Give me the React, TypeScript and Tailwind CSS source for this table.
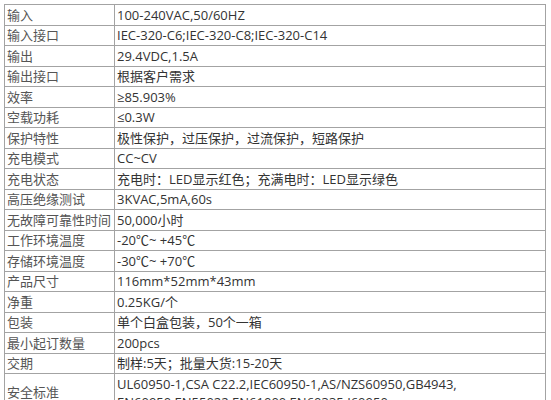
const rows: [string, string][] = [
  ['输入', '100-240VAC,50/60HZ'],
  ['输入接口', 'IEC-320-C6;IEC-320-C8;IEC-320-C14'],
  ['输出', '29.4VDC,1.5A'],
  ['输出接口', '根据客户需求'],
  ['效率', '≥85.903%'],
  ['空载功耗', '≤0.3W'],
  ['保护特性', '极性保护，过压保护，过流保护，短路保护'],
  ['充电模式', 'CC~CV'],
  ['充电状态', '充电时：LED显示红色；充满电时：LED显示绿色'],
  ['高压绝缘测试', '3KVAC,5mA,60s'],
  ['无故障可靠性时间', '50,000小时'],
  ['工作环境温度', '-20℃~ +45℃'],
  ['存储环境温度', '-30℃~ +70℃'],
  ['产品尺寸', '116mm*52mm*43mm'],
  ['净重', '0.25KG/个'],
  ['包装', '单个白盒包装，50个一箱'],
  ['最小起订数量', '200pcs'],
  ['交期', '制样:5天；批量大货:15-20天'],
]

export default function App() {
  return (
    <div className="w-[551px] h-[400px] overflow-hidden bg-white pt-[4px] pl-[4px] font-['Open_Sans','Noto_Sans_CJK_SC',sans-serif] text-[13px] text-[#333]">
      <table className="w-[542px] border-collapse border border-[#8f8f8f]">
        <tbody>
          {rows.map(([k, v]) => (
            <tr key={k} className="h-[20.5px]">
              <td className="w-[110px] border border-[#a3a3a3] pl-[2px] py-0 leading-[18px] whitespace-nowrap text-[#555]">{k}</td>
              <td className="border border-[#a3a3a3] pl-[2px] py-0 leading-[18px] whitespace-nowrap">{v}</td>
            </tr>
          ))}
          <tr>
            <td className="w-[110px] border border-[#a3a3a3] pl-[2px] text-[#555]">安全标准</td>
            <td className="border border-[#a3a3a3] pl-[2px] py-[1px] leading-[18px] whitespace-nowrap">
              UL60950-1,CSA C22.2,IEC60950-1,AS/NZS60950,GB4943,
              <br />
              EN60950,EN55022,EN61000,EN60335,J60950
            </td>
          </tr>
        </tbody>
      </table>
    </div>
  )
}
